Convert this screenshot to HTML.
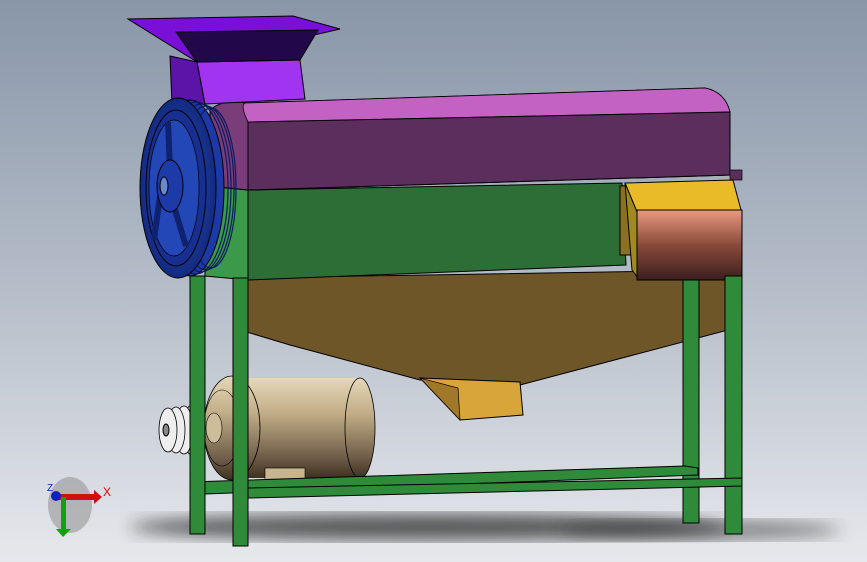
<!DOCTYPE html>
<html><head><style>
html,body{margin:0;padding:0;width:867px;height:562px;overflow:hidden}
svg{display:block}
text{font-family:"Liberation Sans",sans-serif}
</style></head><body>
<svg width="867" height="562" viewBox="0 0 867 562" xmlns="http://www.w3.org/2000/svg">
<defs>
<linearGradient id="bg" x1="0" y1="0" x2="0" y2="1">
<stop offset="0" stop-color="#8896a8"/><stop offset="0.5" stop-color="#b4bcc8"/><stop offset="1" stop-color="#e6e8ec"/>
</linearGradient>
<linearGradient id="roll" x1="0" y1="0" x2="0" y2="1">
<stop offset="0" stop-color="#e89a80"/><stop offset="0.5" stop-color="#8a4a3a"/><stop offset="1" stop-color="#3a1e1e"/>
</linearGradient>
<linearGradient id="mot" x1="0" y1="0" x2="0" y2="1">
<stop offset="0" stop-color="#e6d8b8"/><stop offset="0.35" stop-color="#c2ae88"/><stop offset="0.8" stop-color="#6e5c48"/><stop offset="1" stop-color="#3e3020"/>
</linearGradient>
<radialGradient id="blue" cx="0.5" cy="0.5" r="0.5">
<stop offset="0" stop-color="#2f55c8"/><stop offset="1" stop-color="#122a80"/>
</radialGradient>
<filter id="bl"><feGaussianBlur stdDeviation="8"/></filter>
</defs>
<rect width="867" height="562" fill="url(#bg)"/>
<!-- shadow -->
<ellipse cx="430" cy="527" rx="300" ry="13" fill="#2a2a2a" opacity="0.75" filter="url(#bl)"/>
<ellipse cx="700" cy="530" rx="140" ry="10" fill="#2a2a2a" opacity="0.5" filter="url(#bl)"/>
<!-- hopper bottom -->
<polygon points="240,278 730,270 728,330 520,385 420,380 290,345 240,330" fill="#6e5628" stroke="#000" stroke-width="1"/>
<polygon points="420,378 520,382 523,415 460,420" fill="#d8a53a" stroke="#000"/>
<polygon points="420,378 460,420 458,388" fill="#a07828" stroke="#000" stroke-width="0.7"/>
<!-- legs back -->
<rect x="683" y="278" width="16" height="245" fill="#2f8a3a" stroke="#000"/>
<!-- green body -->
<polygon points="205,186 248,190 248,280 205,276" fill="#3a9a4a" stroke="#000"/>
<polygon points="248,190 622,183 626,265 248,280" fill="#2c6e36" stroke="#000"/>
<!-- main box -->
<path d="M210,110 Q225,98 245,103 L705,88 Q725,92 730,112 L730,175 L248,190 L210,186 Z" fill="#7a3d7a" stroke="#000"/>
<path d="M245,103 L705,88 Q725,92 730,112 L248,122 Q240,106 245,103Z" fill="#c462c4" stroke="#000" stroke-width="0.8"/>
<polygon points="248,122 730,112 730,175 248,190" fill="#5c2e5e" stroke="#000"/>
<rect x="730" y="170" width="12" height="10" fill="#5c2e5e" stroke="#000" stroke-width="0.7"/>
<!-- hopper top -->
<polygon points="170,56 197,62 205,104 172,104" fill="#5c14a8" stroke="#000"/>
<polygon points="197,62 300,60 305,99 205,104" fill="#a034f0" stroke="#000"/>
<polygon points="128,19 293,16 340,29 197,62" fill="#7a10d8" stroke="#000"/>
<polygon points="176,32 318,30 300,60 197,62" fill="#22084a" stroke="#000"/>
<!-- yellow box & roller -->
<polygon points="620,186 660,184 660,255 620,255" fill="#8a7020" stroke="#000"/>
<polygon points="625,183 733,180 741,210 637,212" fill="#e9bb28" stroke="#000"/>
<polygon points="625,183 637,212 638,278 632,270" fill="#a08a20" stroke="#000"/>
<rect x="637" y="210" width="105" height="70" fill="url(#roll)" stroke="#000"/>
<!-- front legs -->
<rect x="725" y="276" width="17" height="258" fill="#2f8a3a" stroke="#000"/>
<!-- motor -->
<rect x="240" y="378" width="120" height="100" fill="url(#mot)"/>
<ellipse cx="360" cy="428" rx="15" ry="50" fill="url(#mot)" stroke="#000" stroke-width="0.8"/>
<ellipse cx="232" cy="428" rx="28" ry="52" fill="url(#mot)" stroke="#000" stroke-width="0.8"/>
<ellipse cx="222" cy="428" rx="18" ry="38" fill="none" stroke="#000" stroke-width="0.6"/>
<ellipse cx="214" cy="428" rx="8" ry="15" fill="#cdbd9a" stroke="#000" stroke-width="0.6"/>
<g fill="#eee" stroke="#000" stroke-width="0.8">
<ellipse cx="192" cy="430" rx="9" ry="25"/><ellipse cx="184" cy="430" rx="9" ry="24"/><ellipse cx="176" cy="430" rx="9" ry="23"/><ellipse cx="168" cy="430" rx="9" ry="22"/>
</g>
<ellipse cx="166" cy="430" rx="3" ry="6" fill="#888" stroke="#000"/>
<rect x="265" y="468" width="40" height="12" fill="#c8b48f" stroke="#000" stroke-width="0.6"/>
<!-- bars -->
<polygon points="190,482 685,466 698,468 698,475 205,494 190,492" fill="#2f8a3a" stroke="#000"/>
<polygon points="248,488 742,478 742,486 248,498" fill="#2f8a3a" stroke="#000"/>
<rect x="190" y="276" width="15" height="258" fill="#2f8a3a" stroke="#000"/>
<rect x="233" y="278" width="15" height="268" fill="#2f8a3a" stroke="#000"/>
<!-- big pulley -->
<ellipse cx="190" cy="188" rx="34" ry="88" fill="#1b3aa8" stroke="#000"/>
<g fill="none" stroke="#0a1a60" stroke-width="1.2"><ellipse cx="196" cy="188" rx="32" ry="86"/><ellipse cx="201" cy="188" rx="30" ry="84"/><ellipse cx="206" cy="188" rx="28" ry="82"/><ellipse cx="211" cy="188" rx="25" ry="80"/></g>
<ellipse cx="178" cy="188" rx="38" ry="90" fill="url(#blue)" stroke="#000"/>
<ellipse cx="176" cy="188" rx="30" ry="78" fill="#162f90" stroke="#000"/>
<ellipse cx="174" cy="188" rx="25" ry="68" fill="#2447b8" stroke="#000" stroke-width="0.7"/>
<g stroke="#0e2270" stroke-width="6"><line x1="170" y1="170" x2="168" y2="122"/><line x1="172" y1="200" x2="186" y2="246"/><line x1="160" y1="196" x2="154" y2="240"/></g>
<ellipse cx="170" cy="186" rx="13" ry="26" fill="#1c3aa8" stroke="#000"/>
<ellipse cx="164" cy="186" rx="4" ry="9" fill="#6a8ad0" stroke="#000"/>
<!-- axis triad -->
<ellipse cx="70" cy="505" rx="22" ry="28" fill="#888" opacity="0.5"/>
<rect x="58" y="494" width="36" height="6" fill="#d01010"/>
<polygon points="94,490 102,497 94,504" fill="#d01010"/>
<text x="103" y="496" font-size="12" fill="#e00000">X</text>
<rect x="61" y="497" width="5" height="32" fill="#10a010"/>
<polygon points="56,529 71,529 63,537" fill="#10a010"/>
<circle cx="56" cy="496" r="5" fill="#1020c0"/>
<text x="47" y="491" font-size="10" fill="#1020c0">Z</text>
</svg>
</body></html>
